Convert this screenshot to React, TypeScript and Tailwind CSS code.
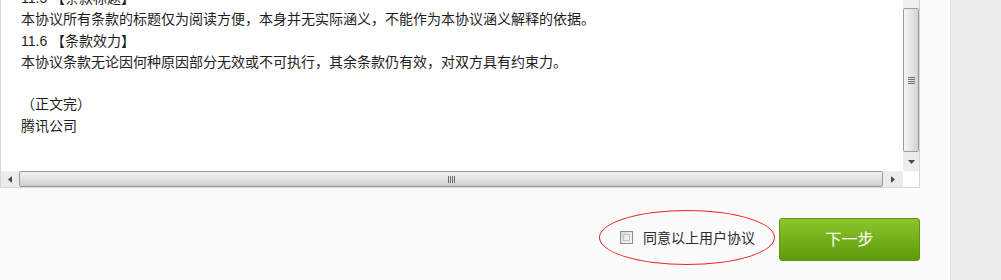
const lines = [
  "11.5 【条款标题】",
  "本协议所有条款的标题仅为阅读方便，本身并无实际涵义，不能作为本协议涵义解释的依据。",
  "11.6 【条款效力】",
  "本协议条款无论因何种原因部分无效或不可执行，其余条款仍有效，对双方具有约束力。",
  "",
  "（正文完）",
  "腾讯公司",
];

function Triangle({ dir }: { dir: "down" | "left" | "right" }) {
  const pts =
    dir === "down" ? "0,0 7,0 3.5,4" : dir === "left" ? "4,0 4,7 0,3.5" : "0,0 0,7 4,3.5";
  const w = dir === "down" ? 7 : 4;
  const h = dir === "down" ? 4 : 7;
  return (
    <svg width={w} height={h} viewBox={`0 0 ${w} ${h}`}>
      <polygon points={pts} fill="#4a4a4a" />
    </svg>
  );
}

function VerticalBar() {
  return (
    <div className="flex w-[16px] flex-col bg-[#f0f0f0]">
      <div className="h-[152px] pt-[8px]">
        <div className="flex h-[144px] items-center justify-center rounded-[2px] border border-[#9b9b9b] bg-gradient-to-r from-[#f4f4f4] via-[#e6e6e6] to-[#d2d2d2]">
          <div className="flex w-[7px] flex-col gap-[1px]">
            <div className="h-[1px] bg-[#6d6d6d]" />
            <div className="h-[1px] bg-[#6d6d6d]" />
            <div className="h-[1px] bg-[#6d6d6d]" />
            <div className="h-[1px] bg-[#6d6d6d]" />
          </div>
        </div>
      </div>
      <div className="flex h-[19px] items-center justify-center bg-[#ececec]">
        <Triangle dir="down" />
      </div>
    </div>
  );
}

function HorizontalBar() {
  return (
    <div className="flex h-[16px] bg-[#ececec]">
      <div className="flex w-[18px] items-center justify-center">
        <Triangle dir="left" />
      </div>
      <div className="flex w-[864px] items-center justify-center rounded-[2px] border border-[#9b9b9b] bg-gradient-to-b from-[#f2f2f2] via-[#e2e2e2] to-[#cdcdcd]">
        <div className="flex h-[7px] gap-[1px]">
          <div className="w-[1px] bg-[#6d6d6d]" />
          <div className="w-[1px] bg-[#6d6d6d]" />
          <div className="w-[1px] bg-[#6d6d6d]" />
          <div className="w-[1px] bg-[#6d6d6d]" />
        </div>
      </div>
      <div className="flex w-[20px] items-center justify-center">
        <Triangle dir="right" />
      </div>
      <div className="w-[16px] bg-white" />
    </div>
  );
}

export default function App() {
  return (
    <div className="flex h-[280px] w-[1001px] overflow-hidden bg-[#fbfbfb] font-['Liberation_Sans','Noto_Sans_CJK_SC',sans-serif]">
      <div className="w-[950px] shrink-0">
        <div className="flex h-[188px] w-[920px] flex-col border-x border-b border-[#d6d6d6] bg-white">
          <div className="flex h-[171px]">
            <div className="flex-1 overflow-hidden pl-[20px]">
              <div className="-mt-[12px] text-[14px] leading-[21.3px] text-[#1e1e1e]">
                {lines.map((l, i) => (
                  <div key={i} className="h-[21.3px] whitespace-nowrap">
                    {l}
                  </div>
                ))}
              </div>
            </div>
            <VerticalBar />
          </div>
          <HorizontalBar />
        </div>

        <div className="mt-[22px] flex w-[920px] items-start justify-end gap-[4px]">
          <label className="flex h-[55px] w-[176px] items-center gap-[10px] rounded-[50%] border border-[#e8262b] pl-[20px] text-[14px] text-[#2a2a2a]">
            <span className="h-[13px] w-[13px] border border-[#8e8e8e] bg-gradient-to-br from-[#d8d8d8] to-[#f6f6f6] p-[2px]">
              <span className="block h-full w-full border border-[#c4c4c4] bg-gradient-to-br from-[#e2e2e2] to-[#f8f8f8]" />
            </span>
            <span className="mt-[2px]">同意以上用户协议</span>
          </label>
          <button className="mt-[8px] flex h-[43px] w-[141px] items-center justify-center rounded-[3px] border border-[#5f9417] bg-gradient-to-b from-[#8cc62b] to-[#5e9a08] text-[16px] text-white">
            下一步
          </button>
        </div>
      </div>
      <div className="flex-1 border-l border-[#e2e2e2] bg-[#ebebeb]" />
    </div>
  );
}
